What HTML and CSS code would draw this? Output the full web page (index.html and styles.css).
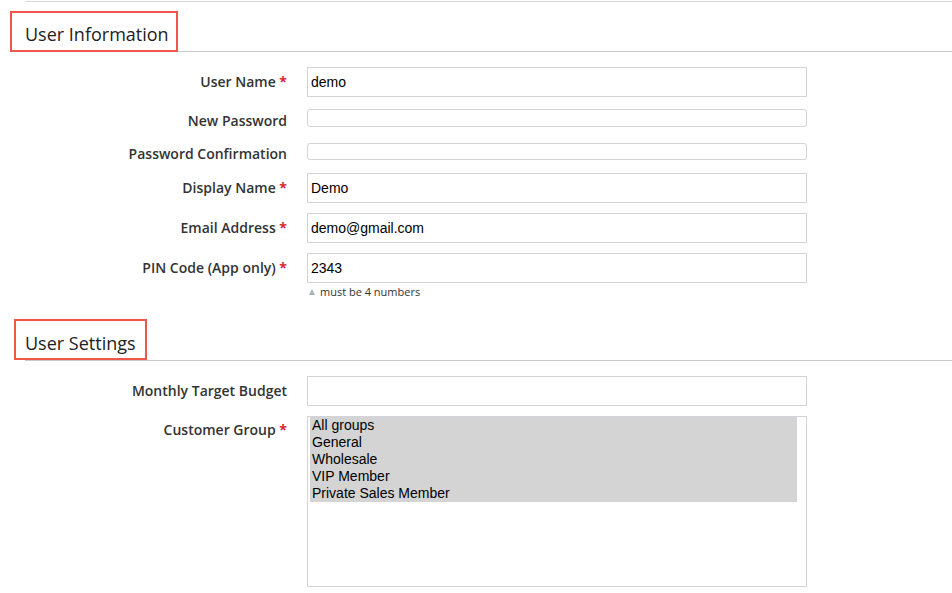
FILE: index.html
```html
<!DOCTYPE html>
<html>
<head>
<meta charset="utf-8">
<link rel="stylesheet" href="styles.css">
</head>
<body>
<div class="page">
  <div class="toprule"></div>

  <section class="section">
    <h2 class="section-title">User Information<span class="mark mark-info"></span></h2>
    <div class="form form-info">
      <div class="row row-1">
        <label class="label">User Name <span class="req">*</span></label>
        <div class="field"><input class="input" type="text" value="demo"></div>
      </div>
      <div class="row row-2">
        <label class="label">New Password</label>
        <div class="field"><input class="input input-small" type="password"></div>
      </div>
      <div class="row row-3">
        <label class="label">Password Confirmation</label>
        <div class="field"><input class="input input-small" type="password"></div>
      </div>
      <div class="row row-4">
        <label class="label">Display Name <span class="req">*</span></label>
        <div class="field"><input class="input" type="text" value="Demo"></div>
      </div>
      <div class="row row-5">
        <label class="label">Email Address <span class="req">*</span></label>
        <div class="field"><input class="input" type="text" value="demo@gmail.com"></div>
      </div>
      <div class="row row-6">
        <label class="label">PIN Code (App only) <span class="req">*</span></label>
        <div class="field">
          <input class="input" type="text" value="2343">
          <div class="hint"><span class="tri"></span>must be 4 numbers</div>
        </div>
      </div>
    </div>
  </section>

  <section class="section section-settings">
    <h2 class="section-title">User Settings<span class="mark mark-settings"></span></h2>
    <div class="form form-settings">
      <div class="row row-7">
        <label class="label">Monthly Target Budget</label>
        <div class="field"><input class="input" type="text"></div>
      </div>
      <div class="row row-8">
        <label class="label label-top">Customer Group <span class="req">*</span></label>
        <div class="field">
          <div class="listbox">
            <div class="option">All groups</div>
            <div class="option">General</div>
            <div class="option">Wholesale</div>
            <div class="option">VIP Member</div>
            <div class="option">Private Sales Member</div>
          </div>
        </div>
      </div>
    </div>
  </section>
</div>
</body>
</html>
```

FILE: styles.css
```css
* { box-sizing: border-box; }
html, body { margin: 0; padding: 0; background: #fff; }
body {
  font-family: "Open Sans", "Liberation Sans", sans-serif;
  color: #333;
  width: 952px;
  height: 593px;
  overflow: hidden;
}
.page { padding-left: 25px; }
.toprule { height: 1px; margin-top: 1px; background: #d6d6d6; }

.section-title {
  position: relative;
  margin: 0;
  padding: 20px 0 5px 0;
  font-size: 18px;
  line-height: 24px;
  font-weight: 400;
  color: #222;
  border-bottom: 1px solid #c8c8c8;
}
.section-settings .section-title { margin-top: 12px; }

.mark {
  position: absolute;
  border: 2px solid #f0574a;
  pointer-events: none;
}
.mark-info { left: -15px; top: 9px; width: 168px; height: 41px; }
.mark-settings { left: -11px; top: 8px; width: 133px; height: 41px; }

.form { display: flex; flex-direction: column; }
.form-info { padding-top: 15px; }
.form-settings { padding-top: 15px; }

.row {
  display: grid;
  grid-template-columns: 262px 500px;
  column-gap: 20px;
  align-items: center;
}
.row-2 { margin-top: 12px; align-items: start; }
.row-2 .label { margin-top: 4px; margin-bottom: -4px; }
.row-3 { margin-top: 16px; align-items: start; }
.row-3 .label { margin-top: 3px; margin-bottom: -3px; }
.row-4 { margin-top: 13px; }
.row-5 { margin-top: 10px; }
.row-6 { margin-top: 10px; align-items: start; }
.row-6 .label { line-height: 30px; }
.row-8 { margin-top: 10px; align-items: start; }

.label {
  text-align: right;
  font-size: 14px;
  line-height: 16px;
  font-weight: 600;
  color: #333;
  white-space: nowrap;
}
.label-top { padding-top: 6px; }
.req { color: #d7262e; font-weight: 700; }

.field { display: flex; flex-direction: column; }
.input {
  display: block;
  width: 500px;
  height: 30px;
  margin: 0;
  padding: 0 3px;
  border: 1px solid #d3d3d9;
  border-radius: 0;
  font-family: "Liberation Sans", Arial, sans-serif;
  font-size: 14px;
  color: #000;
  background: #fff;
  outline: none;
}
.input-small { height: 18px; border-radius: 3px; }
.row-3 .input-small { height: 17px; }

.hint {
  margin-top: 2px;
  padding-left: 2px;
  font-size: 11px;
  line-height: 14px;
  color: #333;
  display: flex;
  align-items: center;
}
.tri {
  width: 0; height: 0;
  border-left: 3.5px solid transparent;
  border-right: 3.5px solid transparent;
  border-bottom: 6px solid #aab0b5;
  margin-right: 5px;
  margin-top: -1px;
}

.listbox {
  width: 500px;
  height: 171px;
  border: 1px solid #d3d3d9;
  padding: 0 9px 0 2px;
  font-family: "Liberation Sans", Arial, sans-serif;
  font-size: 14px;
  color: #000;
}
.option {
  background: #d4d4d4;
  line-height: 17px;
  height: 17px;
  padding-left: 2px;
}
```
